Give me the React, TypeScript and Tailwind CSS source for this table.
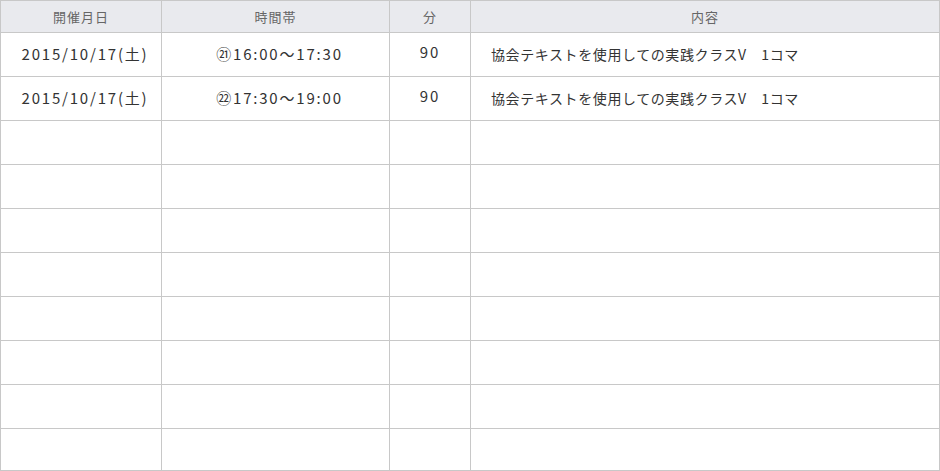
const rows = [
  { date: "2015/10/17(土)", time: "㉑16:00〜17:30", min: "90", content: "協会テキストを使用しての実践クラスV　1コマ" },
  { date: "2015/10/17(土)", time: "㉒17:30〜19:00", min: "90", content: "協会テキストを使用しての実践クラスV　1コマ" },
  ...Array.from({ length: 8 }, () => ({ date: "", time: "", min: "", content: "" })),
];

export default function App() {
  return (
    <div className="w-[940px] bg-white text-[#333] font-['Noto_Sans_CJK_JP',sans-serif]">
      <table className="w-[940px] table-fixed border-collapse">
        <colgroup>
          <col className="w-[161px]" />
          <col className="w-[228px]" />
          <col className="w-[81px]" />
          <col />
        </colgroup>
        <thead>
          <tr className="h-[32px] bg-[#e9eaee] text-[13px] font-normal text-[#666] tracking-[1px]">
            <th className="border border-[#c8c8c8] font-normal">開催月日</th>
            <th className="border border-[#c8c8c8] font-normal">時間帯</th>
            <th className="border border-[#c8c8c8] font-normal">分</th>
            <th className="border border-[#c8c8c8] font-normal">内容</th>
          </tr>
        </thead>
        <tbody>
          {rows.map((r, i) => (
            <tr key={i} className={i === rows.length - 1 ? "h-[42px]" : "h-[44px]"}>
              <td className="border border-[#c8c8c8] text-center text-[15px] tracking-[1.8px] pl-2">{r.date}</td>
              <td className="border border-[#c8c8c8] text-center text-[15px] tracking-[1.8px] pl-2">{r.time}</td>
              <td className="border border-[#c8c8c8] text-center text-[15px] tracking-[1.8px] pb-1">{r.min}</td>
              <td className="border border-[#c8c8c8] text-left text-[14px] tracking-[0.6px] pl-5">{r.content}</td>
            </tr>
          ))}
        </tbody>
      </table>
    </div>
  );
}
